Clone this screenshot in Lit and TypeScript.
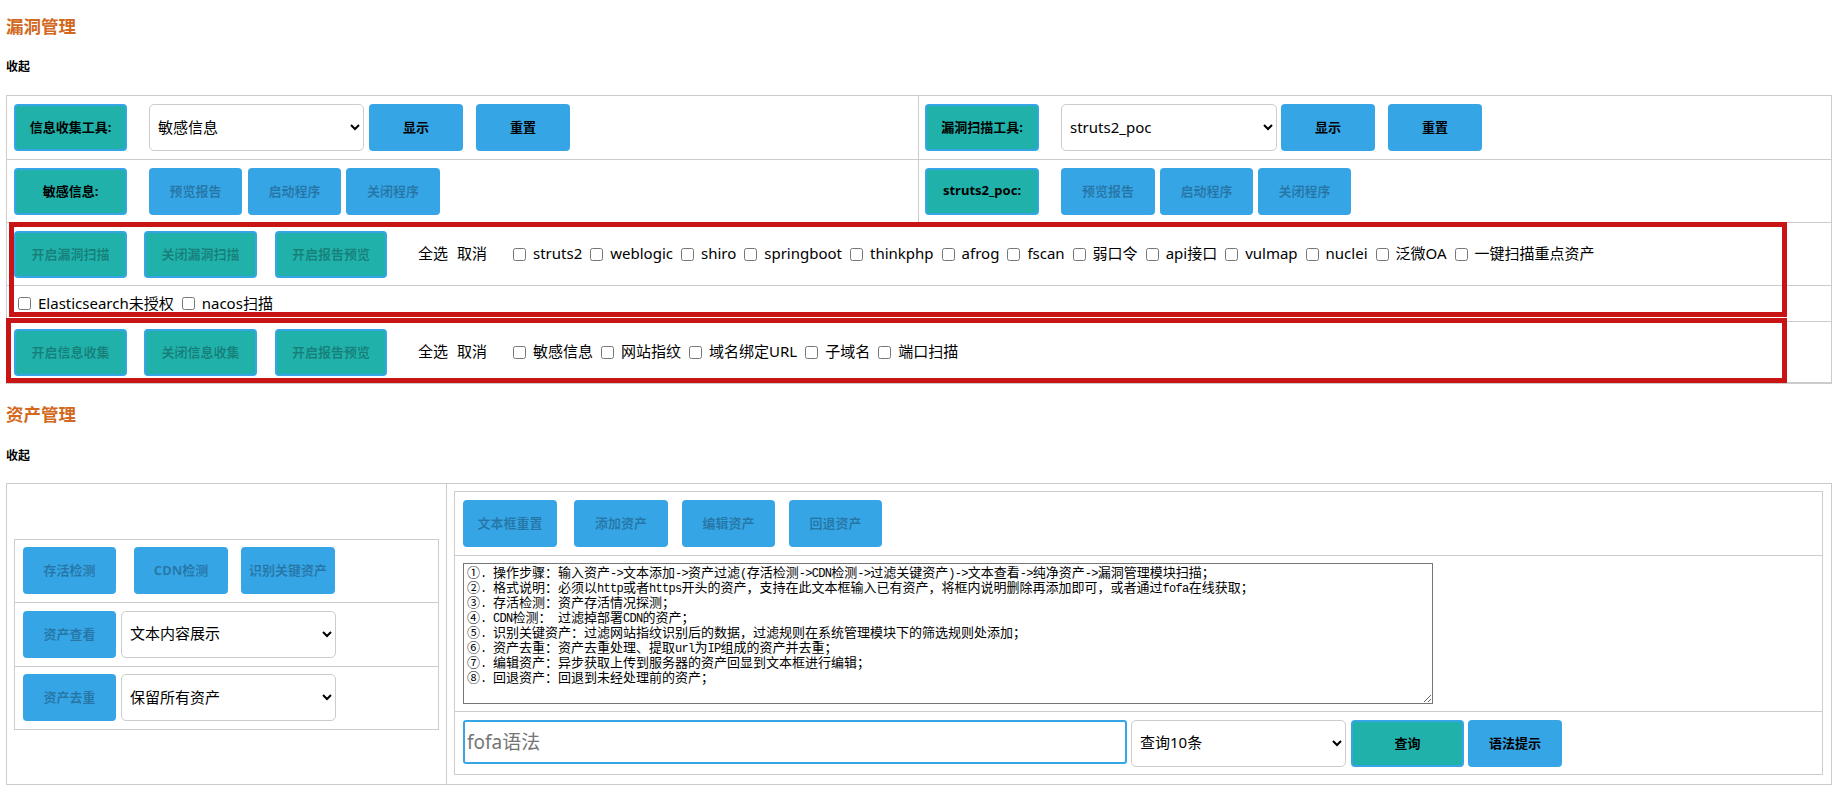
import { LitElement, html, css } from "lit";
import { customElement } from "lit/decorators.js";

const GUIDE = `①. 操作步骤：输入资产->文本添加->资产过滤(存活检测->CDN检测->过滤关键资产)->文本查看->纯净资产->漏洞管理模块扫描；
②. 格式说明：必须以http或者https开头的资产，支持在此文本框输入已有资产，将框内说明删除再添加即可，或者通过fofa在线获取；
③. 存活检测：资产存活情况探测；
④. CDN检测： 过滤掉部署CDN的资产；
⑤. 识别关键资产：过滤网站指纹识别后的数据，过滤规则在系统管理模块下的筛选规则处添加；
⑥. 资产去重：资产去重处理、提取url为IP组成的资产并去重；
⑦. 编辑资产：异步获取上传到服务器的资产回显到文本框进行编辑；
⑧. 回退资产：回退到未经处理前的资产；
`;

const SCAN_TOOLS = ["struts2", "weblogic", "shiro", "springboot", "thinkphp", "afrog", "fscan", "弱口令", "api接口", "vulmap", "nuclei", "泛微OA", "一键扫描重点资产"];
const SCAN_TOOLS_2 = ["Elasticsearch未授权", "nacos扫描"];
const INFO_TOOLS = ["敏感信息", "网站指纹", "域名绑定URL", "子域名", "端口扫描"];

@customElement("app-root")
export class AppRoot extends LitElement {
  static styles = css`
    :host {
      display: block;
      width: 1840px;
      height: 791px;
      overflow: hidden;
      background: #fff;
      color: #000;
      font-family: "Noto Sans", "Noto Sans CJK SC", sans-serif;
      font-size: 15px;
    }

    h3 {
      margin: 0 0 0 6px;
      padding-top: 14px;
      font-size: 17.5px;
      line-height: 24px;
      font-weight: 700;
      color: #d2691e;
    }
    h3.second {
      padding-top: 18px;
    }
    .fold {
      margin: 21px 0 20px 6px;
      font-size: 12px;
      line-height: 16px;
      font-weight: 700;
    }
    h3.second + .fold {
      margin: 22px 0 19px 6px;
    }

    .panel {
      position: relative;
      box-sizing: border-box;
      width: 1826px;
      margin-left: 6px;
      border: 1px solid #ccc;
    }
    .row {
      display: flex;
      align-items: center;
      box-sizing: border-box;
      padding-left: 7px;
      border-bottom: 1px solid #ccc;
    }
    .row:last-child {
      border-bottom: 0;
    }
    .h64 { height: 64px; }
    .h63 { height: 63px; }
    .h36 { height: 36px; }
    .h61 { height: 61px; }
    .split {
      padding-left: 0;
      align-items: stretch;
    }
    .cell {
      display: flex;
      align-items: center;
      padding-left: 7px;
    }
    .cell.left {
      box-sizing: border-box;
      width: 912px;
      border-right: 1px solid #ccc;
    }
    .cell.right {
      padding-left: 6px;
    }

    button {
      box-sizing: border-box;
      flex: none;
      height: 47px;
      padding: 0 0 2px;
      border: 2px solid #36a5e6;
      border-radius: 4px;
      background: #36a5e6;
      color: #000;
      font-family: inherit;
      font-size: 13px;
      font-weight: 700;
    }
    button.teal {
      background: #20b2aa;
    }
    button.off {
      color: rgba(0, 0, 0, 0.28);
    }
    select {
      box-sizing: border-box;
      flex: none;
      height: 47px;
      padding: 0 4px 2px;
      border: 1px solid #ccc;
      border-radius: 5px;
      background: #fff;
      color: #000;
      font-family: inherit;
      font-size: 15px;
    }

    .w93 { width: 93px; }
    .w94 { width: 94px; }
    .w112 { width: 112px; }
    .w113 { width: 113px; }
    .w114 { width: 114px; }
    .s215 { width: 215px; }
    .s216 { width: 216px; }
    .ml4 { margin-left: 4px; }
    .ml5 { margin-left: 5px; }
    .ml6 { margin-left: 6px; }
    .ml13 { margin-left: 13px; }
    .ml14 { margin-left: 14px; }
    .ml17 { margin-left: 17px; }
    .ml18 { margin-left: 18px; }
    .ml22 { margin-left: 22px; }

    .picks {
      display: flex;
      margin: 0 0 3px 31px;
      gap: 9px;
      width: 95px;
    }
    label {
      display: inline-flex;
      align-items: center;
      gap: 7px;
      margin: 0 8px 3px 0;
      white-space: nowrap;
    }
    input[type="checkbox"] {
      width: 13px;
      height: 13px;
      margin: 3px 0 0;
    }
    .tail {
      padding-left: 11px;
    }

    /* red highlight frames drawn over the table rows */
    .frame {
      position: absolute;
      box-sizing: border-box;
      border: 5px solid #c81414;
      pointer-events: none;
    }
    .frame.scan {
      left: 2px;
      top: 126px;
      width: 1778px;
      height: 95px;
    }
    .frame.info {
      left: -1px;
      top: 222px;
      width: 1781px;
      height: 65px;
    }

    .assets {
      display: flex;
      height: 300px;
    }
    .assets .side {
      box-sizing: border-box;
      width: 440px;
      flex: none;
      display: flex;
      align-items: center;
      padding: 0 7px;
      border-right: 1px solid #ccc;
    }
    .assets .main {
      flex: 1;
      padding: 7px 8px 8px 7px;
      min-width: 0;
    }
    .inner {
      box-sizing: border-box;
      width: 100%;
      border: 1px solid #ccc;
    }
    .inner .row {
      padding-left: 8px;
    }
    .h62b { height: 62px; }
    .h156 { height: 156px; }

    .guide {
      box-sizing: border-box;
      width: 970px;
      height: 141px;
      padding: 2px 2px 2px 3px;
      border: 1px solid #767676;
      overflow: auto;
      resize: both;
      white-space: pre-wrap;
      font-family: "Liberation Mono", "Noto Sans CJK SC", monospace;
      font-size: 13px;
      line-height: 15px;
    }
    /* ascii runs are half the width of the cjk cells */
    .guide span {
      font-size: 12px;
      line-height: 0;
      letter-spacing: -0.7px;
    }
    .search {
      box-sizing: border-box;
      flex: none;
      width: 664px;
      height: 44px;
      margin-bottom: 3px;
      padding: 0 2px;
      border: 2px solid #36a5e6;
      border-radius: 3px;
      outline: none;
      font-family: inherit;
      font-size: 19px;
    }
    .search::placeholder {
      color: #757575;
    }
  `;

  private checks(names: string[]) {
    return names.map((n) => html`<label><input type="checkbox" />${n}</label>`);
  }

  private controls(a: string, b: string, names: string[]) {
    return html`
      <button class="teal off w113">${a}</button>
      <button class="teal off w113 ml17">${b}</button>
      <button class="teal off w112 ml18">开启报告预览</button>
      <div class="picks"><span>全选</span><span>取消</span></div>
      ${this.checks(names)}
    `;
  }

  private guide() {
    return GUIDE.split(/([\x21-\x7e ]+)/).map((part, i) =>
      i % 2 ? html`<span>${part}</span>` : part
    );
  }

  render() {
    return html`
      <h3>漏洞管理</h3>
      <div class="fold">收起</div>
      <div class="panel">
        <div class="row split h64">
          <div class="cell left">
            <button class="teal w113">信息收集工具:</button>
            <select class="s215 ml22"><option>敏感信息</option></select>
            <button class="w94 ml5">显示</button>
            <button class="w94 ml13">重置</button>
          </div>
          <div class="cell right">
            <button class="teal w114">漏洞扫描工具:</button>
            <select class="s216 ml22"><option>struts2_poc</option></select>
            <button class="w94 ml4">显示</button>
            <button class="w94 ml13">重置</button>
          </div>
        </div>
        <div class="row split h63">
          <div class="cell left">
            <button class="teal w113">敏感信息:</button>
            <button class="off w93 ml22">预览报告</button>
            <button class="off w93 ml6">启动程序</button>
            <button class="off w94 ml5">关闭程序</button>
          </div>
          <div class="cell right">
            <button class="teal w114">struts2_poc:</button>
            <button class="off w94 ml22">预览报告</button>
            <button class="off w93 ml5">启动程序</button>
            <button class="off w93 ml5">关闭程序</button>
          </div>
        </div>
        <div class="row h63">${this.controls("开启漏洞扫描", "关闭漏洞扫描", SCAN_TOOLS)}</div>
        <div class="row tail h36">${this.checks(SCAN_TOOLS_2)}</div>
        <div class="row h61">${this.controls("开启信息收集", "关闭信息收集", INFO_TOOLS)}</div>
        <div class="frame scan"></div>
        <div class="frame info"></div>
      </div>

      <h3 class="second">资产管理</h3>
      <div class="fold">收起</div>
      <div class="panel">
        <div class="assets">
          <div class="side">
            <div class="inner">
              <div class="row h63">
                <button class="off w93">存活检测</button>
                <button class="off w94 ml18">CDN检测</button>
                <button class="off w94 ml13">识别关键资产</button>
              </div>
              <div class="row h64">
                <button class="off w93">资产查看</button>
                <select class="s215 ml5"><option>文本内容展示</option></select>
              </div>
              <div class="row h62b">
                <button class="off w93">资产去重</button>
                <select class="s215 ml5"><option>保留所有资产</option></select>
              </div>
            </div>
          </div>
          <div class="main">
            <div class="inner">
              <div class="row h64">
                <button class="off w94">文本框重置</button>
                <button class="off w94 ml17">添加资产</button>
                <button class="off w93 ml14">编辑资产</button>
                <button class="off w93 ml14">回退资产</button>
              </div>
              <div class="row h156">
                <div class="guide" role="textbox" aria-multiline="true">${this.guide()}</div>
              </div>
              <div class="row h62b">
                <input class="search" placeholder="fofa语法" />
                <select class="s215 ml4"><option>查询10条</option></select>
                <button class="teal w113 ml5">查询</button>
                <button class="w94 ml4">语法提示</button>
              </div>
            </div>
          </div>
        </div>
      </div>
    `;
  }
}
